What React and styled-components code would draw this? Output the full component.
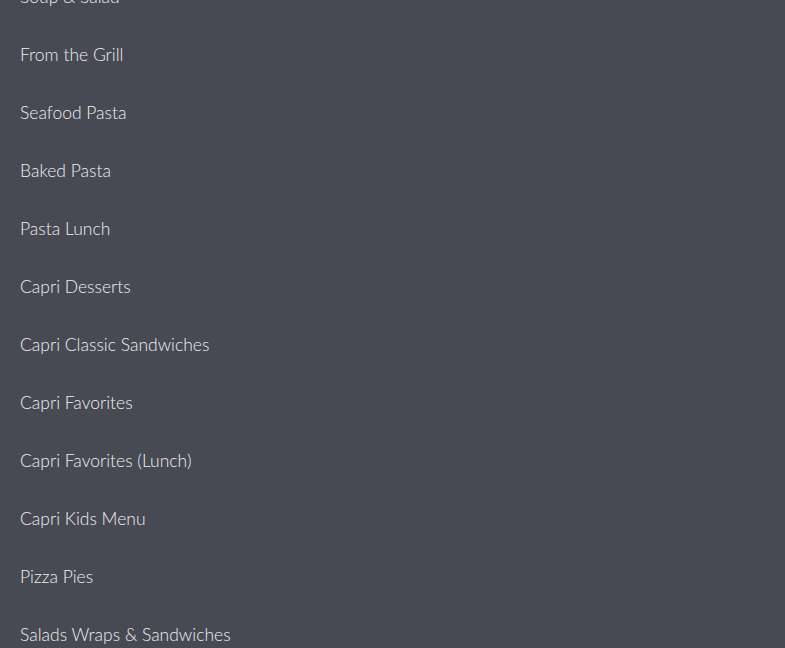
import React from "react"
import styled, { createGlobalStyle } from "styled-components"

const GlobalStyle = createGlobalStyle`
  html, body {
    margin: 0;
    padding: 0;
    background: #474953;
    overflow: hidden;
  }
`

const MenuList = styled.ul`
  list-style: none;
  margin: -32px 0 0;
  padding: 0 20px;
  font-family: "Lato", "Liberation Sans", sans-serif;
  font-weight: 300;
`

const MenuItem = styled.li`
  height: 58px;
  line-height: 58px;
  font-size: 17.5px;
  color: #efeff2;
  white-space: nowrap;
`

const categories = [
  "Soup & Salad",
  "From the Grill",
  "Seafood Pasta",
  "Baked Pasta",
  "Pasta Lunch",
  "Capri Desserts",
  "Capri Classic Sandwiches",
  "Capri Favorites",
  "Capri Favorites (Lunch)",
  "Capri Kids Menu",
  "Pizza Pies",
  "Salads Wraps & Sandwiches",
]

const App = () => (
  <>
    <GlobalStyle />
    <MenuList>
      {categories.map(name => (
        <MenuItem key={name}>{name}</MenuItem>
      ))}
    </MenuList>
  </>
)

export default App
